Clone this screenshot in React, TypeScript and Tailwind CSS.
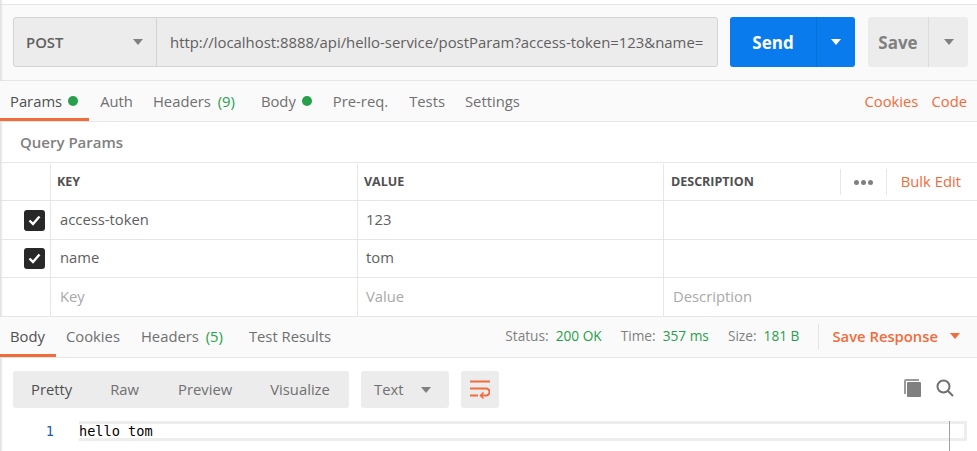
const ORANGE = "text-[#f26b3a]";

function Caret({ className }: { className: string }) {
  return (
    <svg width="10" height="6" viewBox="0 0 10 6" className={className}>
      <path d="M0 0h10L5 6z" fill="currentColor" />
    </svg>
  );
}

function Dot() {
  return <span className="ml-[6px] inline-block h-[10px] w-[10px] rounded-full bg-[#26a04a]" />;
}

function Check() {
  return (
    <span className="flex h-[21px] w-[21px] items-center justify-center rounded-[3px] bg-[#282828]">
      <svg width="13" height="11" viewBox="0 0 13 11">
        <path d="M1.5 5.5L5 9l6.5-7.5" fill="none" stroke="#fff" strokeWidth="2.4" />
      </svg>
    </span>
  );
}

function ParamRow({
  k,
  v,
  d,
  checked,
  placeholder,
  height,
}: {
  k: string;
  v: string;
  d?: string;
  checked?: boolean;
  placeholder?: boolean;
  height: string;
}) {
  const color = placeholder ? "text-[#a9a9a9]" : "text-[#606060]";
  return (
    <div className={`flex border-b border-[#e6e6e6] text-[14.8px] ${height} ${color}`}>
      <div className="flex w-[51px] shrink-0 items-center justify-end border-r border-[#e6e6e6] pr-[5px]">
        {checked && <Check />}
      </div>
      <div className="flex w-[307px] shrink-0 items-center border-r border-[#e6e6e6] pb-[2px] pl-[9px]">{k}</div>
      <div className="flex w-[306px] shrink-0 items-center border-r border-[#e6e6e6] pb-[2px] pl-[8px]">{v}</div>
      <div className="flex flex-1 items-center pb-[2px] pl-[9px]">{d}</div>
    </div>
  );
}

export default function App() {
  return (
    <div className="relative h-[451px] w-[977px] overflow-hidden bg-white font-['Open_Sans',sans-serif]">
      <div className="pointer-events-none absolute inset-y-0 left-0 w-[3px] bg-gradient-to-r from-[#dddddd] to-transparent" />

      <div className="mt-[4px] h-[77px] border-y border-[#e6e6e6] bg-[#fafafa] pl-[13px] pt-[12px]">
        <div className="flex h-[50px]">
          <div className="flex h-[50px] w-[705px] rounded-[3px] border border-[#d4d4d4] bg-[#ececec] text-[14.9px] text-[#606060]">
            <div className="flex w-[143px] shrink-0 items-center justify-between border-r border-[#d4d4d4] pl-[12px] pr-[13px] font-semibold">
              POST
              <Caret className="text-[#808080]" />
            </div>
            <div className="flex flex-1 items-center overflow-hidden whitespace-nowrap pl-[13px]">
              http://localhost:8888/api/hello-service/postParam?access-token=123&amp;name=
            </div>
          </div>
          <div className="ml-[12px] flex h-[50px] w-[125px] rounded-[3px] bg-[#097bed] text-white">
            <div className="flex w-[87px] items-center justify-center border-r border-[#0a6fd4] pt-[1px] text-[17px] font-bold">Send</div>
            <div className="flex flex-1 items-center justify-center">
              <Caret className="text-white" />
            </div>
          </div>
          <div className="ml-[13px] flex h-[50px] w-[100px] rounded-[3px] bg-[#ececec] text-[#808080]">
            <div className="flex w-[61px] items-center justify-center border-r border-[#dcdcdc] pt-[1px] text-[17px] font-bold">Save</div>
            <div className="flex flex-1 items-center justify-center">
              <Caret className="text-[#808080]" />
            </div>
          </div>
        </div>
      </div>

      <div className="relative flex h-[41px] items-center border-b border-[#e6e6e6] bg-[#fafafa] text-[14.8px] text-[#707070]">
        <span className="ml-[10px] flex items-center text-[#505050]">Params<Dot /></span>
        <span className="ml-[22px]">Auth</span>
        <span className="ml-[20px]">Headers <span className="ml-[3px] text-[#26a04a]">(9)</span></span>
        <span className="ml-[26px] flex items-center">Body<Dot /></span>
        <span className="ml-[21px]">Pre-req.</span>
        <span className="ml-[21px]">Tests</span>
        <span className="ml-[20px]">Settings</span>
        <span className={`ml-auto ${ORANGE}`}>Cookies</span>
        <span className={`ml-[13px] mr-[10px] ${ORANGE}`}>Code</span>
        <span className="absolute bottom-0 left-0 h-[3px] w-[89px] bg-[#f26b3a]" />
      </div>

      <div className="flex h-[41px] items-center border-b border-[#e6e6e6] pl-[20px] text-[15px] font-semibold text-[#808080]">
        Query Params
      </div>

      <div className="flex h-[38px] border-b border-[#e6e6e6] pt-[1px] text-[12.5px] font-bold text-[#505050]">
        <div className="w-[51px] shrink-0 border-r border-[#e6e6e6]" />
        <div className="flex w-[307px] shrink-0 items-center border-r border-[#e6e6e6] pl-[6px]">KEY</div>
        <div className="flex w-[306px] shrink-0 items-center border-r border-[#e6e6e6] pl-[6px]">VALUE</div>
        <div className="flex flex-1 items-center pl-[7px]">
          DESCRIPTION
          <div className="ml-auto flex h-[26px] w-[47px] items-center justify-center gap-[2px] border-x border-[#e6e6e6]">
            <span className="h-[5px] w-[5px] rounded-full bg-[#808080]" />
            <span className="h-[5px] w-[5px] rounded-full bg-[#808080]" />
            <span className="h-[5px] w-[5px] rounded-full bg-[#808080]" />
          </div>
          <span className={`ml-[14px] mr-[16px] pb-[2px] text-[14.8px] font-normal ${ORANGE}`}>Bulk Edit</span>
        </div>
      </div>

      <ParamRow k="access-token" v="123" checked height="h-[39px]" />
      <ParamRow k="name" v="tom" checked height="h-[38px]" />
      <ParamRow k="Key" v="Value" d="Description" placeholder height="h-[39px]" />

      <div className="relative flex h-[41px] items-center border-b border-[#e6e6e6] bg-[#fafafa] pb-[2px] text-[14.8px] text-[#707070]">
        <span className="ml-[10px] text-[#505050]">Body</span>
        <span className="ml-[21px]">Cookies</span>
        <span className="ml-[21px]">Headers <span className="ml-[3px] text-[#26a04a]">(5)</span></span>
        <span className="ml-[26px]">Test Results</span>
        <div className="ml-auto flex items-center text-[13.7px] text-[#808080]">
          <span>Status:</span>
          <span className="ml-[7px] text-[#26a04a]">200 OK</span>
          <span className="ml-[19px]">Time:</span>
          <span className="ml-[7px] text-[#26a04a]">357 ms</span>
          <span className="ml-[19px]">Size:</span>
          <span className="ml-[7px] text-[#26a04a]">181 B</span>
          <span className="ml-[19px] h-[25px] border-l border-[#e4e4e4]" />
          <span className={`ml-[13px] text-[14.8px] font-semibold ${ORANGE}`}>Save Response</span>
          <Caret className="ml-[12px] mr-[17px] text-[#f26b3a]" />
        </div>
        <span className="absolute bottom-0 left-0 h-[3px] w-[56px] bg-[#f26b3a]" />
      </div>

      <div className="flex items-start pl-[13px] pt-[13px] text-[14.8px] text-[#707070]">
        <div className="flex h-[37px] w-[336px] items-center rounded-[3px] bg-[#ececec]">
          <span className="ml-[18px] text-[#505050]">Pretty</span>
          <span className="ml-[38px]">Raw</span>
          <span className="ml-[39px]">Preview</span>
          <span className="ml-[38px]">Visualize</span>
        </div>
        <div className="ml-[12px] flex h-[37px] w-[88px] items-center rounded-[3px] bg-[#ececec] pl-[13px]">
          Text
          <Caret className="ml-[18px] text-[#808080]" />
        </div>
        <div className="ml-[12px] flex h-[37px] w-[38px] items-center justify-center rounded-[3px] bg-[#ececec]">
          <svg width="20" height="20" viewBox="0 0 20 20" fill="none" stroke="#f26b3a" strokeWidth="2">
            <path d="M0 1.5h20M0 8.5h16a3.5 3.5 0 0 1 0 7h-5M0 15.5h8" />
            <path d="M13.5 12.5L10.5 15.5l3 3" strokeWidth="1.6" />
          </svg>
        </div>
        <div className="ml-auto mr-[23px] flex items-center gap-[15px] pt-[7px]">
          <svg width="18" height="20" viewBox="0 0 18 20">
            <path d="M3 1h13v2H3v13H1V3a2 2 0 0 1 2-2z" fill="#9a9a9a" />
            <rect x="4" y="4" width="14" height="15" rx="1" fill="#808080" />
          </svg>
          <svg width="18" height="18" viewBox="0 0 18 18" fill="none" stroke="#707070" strokeWidth="2">
            <circle cx="7.5" cy="7.5" r="6" />
            <path d="M12 12l5 5" />
          </svg>
        </div>
      </div>

      <div className="mt-[13px] flex h-[20px] items-center pr-[10px] font-['DejaVu_Sans_Mono','Liberation_Mono',monospace] text-[13.6px]">
        <span className="w-[79px] shrink-0 pr-[25px] text-right text-[#1a5ea8]">1</span>
        <div className="relative flex h-[20px] flex-1 items-center border-y-[3px] border-r-[3px] border-[#ededed] text-black">
          hello tom
          <span className="absolute right-[14px] top-[-3px] h-[40px] w-px bg-[#a0a0a0]" />
        </div>
      </div>
    </div>
  );
}
